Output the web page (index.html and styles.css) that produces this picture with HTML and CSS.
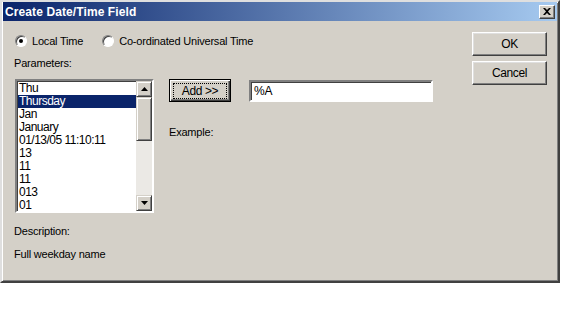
FILE: index.html
```html
<!DOCTYPE html>
<html lang="en">
<head>
    <meta charset="UTF-8">
    <title>Create Date/Time Field</title>
    <link rel="stylesheet" href="styles.css">
</head>
<body>
    <div class="dialog">
        <div class="titlebar">
            <span class="title">Create Date/Time Field</span>
            <button class="close-btn"><svg width="8" height="7" viewBox="0 0 8 7"><path d="M0 0h2l2 2 2-2h2L5 3.5 8 7H6L4 5 2 7H0l3-3.5z" fill="#000"/></svg></button>
        </div>
        <div class="body">
            <div class="main">
                <div class="radios">
                    <label class="radio"><span class="dot checked"></span>Local Time</label>
                    <label class="radio"><span class="dot"></span>Co-ordinated Universal Time</label>
                </div>
                <div class="label params-label">Parameters:</div>
                <div class="params-row">
                    <div class="listbox">
                        <ul class="items">
                            <li>Thu</li>
                            <li class="selected">Thursday</li>
                            <li>Jan</li>
                            <li>January</li>
                            <li>01/13/05 11:10:11</li>
                            <li>13</li>
                            <li>11</li>
                            <li>11</li>
                            <li>013</li>
                            <li>01</li>
                        </ul>
                        <div class="scrollbar">
                            <div class="sb-btn"><svg width="7" height="4" viewBox="0 0 7 4"><path d="M3.5 0L7 4H0z" fill="#000"/></svg></div>
                            <div class="sb-thumb"></div>
                            <div class="sb-track"></div>
                            <div class="sb-btn"><svg width="7" height="4" viewBox="0 0 7 4"><path d="M0 0h7L3.5 4z" fill="#000"/></svg></div>
                        </div>
                    </div>
                    <div class="format-area">
                        <div class="format-row">
                            <button class="btn add-btn"><span class="focus">Add &gt;&gt;</span></button>
                            <div class="textbox">%A</div>
                        </div>
                        <div class="label example">Example:</div>
                    </div>
                </div>
                <div class="label desc-label">Description:</div>
                <div class="label desc">Full weekday name</div>
            </div>
            <div class="side">
                <button class="btn side-btn">OK</button>
                <button class="btn side-btn">Cancel</button>
            </div>
        </div>
    </div>
</body>
</html>
```

FILE: styles.css
```css
body {
    margin: 0;
    background: #fff;
    font-family: "Liberation Sans", Arial, sans-serif;
    font-size: 11px;
    letter-spacing: -0.2px;
    color: #000;
}
.dialog {
    width: 556px;
    height: 279px;
    background: #d4d0c8;
    border: 2px solid;
    border-color: #dfdfdf #404040 #404040 #dfdfdf;
    box-shadow: inset 1px 1px 0 #fff, inset -1px -1px 0 #808080;
}
.titlebar {
    height: 19px;
    margin: 0 1px 0 1px;
    background: linear-gradient(to right, #0a246a, #a6caf0);
    display: flex;
    align-items: center;
    justify-content: space-between;
    padding: 0 2px 0 2px;
}
.title {
    color: #fff;
    font-weight: bold;
    font-size: 12px;
    letter-spacing: 0.1px;
}
.close-btn {
    width: 16px;
    height: 14px;
    padding: 0;
    background: #d4d0c8;
    border: 1px solid;
    border-color: #fff #404040 #404040 #fff;
    box-shadow: inset -1px -1px 0 #808080;
    display: flex;
    align-items: center;
    justify-content: center;
}
.body {
    display: flex;
    justify-content: space-between;
    padding: 9px 11px 0 11px;
}
.main {
    width: 430px;
}
.radios {
    display: flex;
    gap: 17px;
    height: 22px;
    align-items: center;
}
.radio {
    display: flex;
    align-items: center;
    gap: 5px;
}
.dot {
    width: 12px;
    height: 12px;
    border-radius: 50%;
    background: #fff;
    border: 1px solid;
    border-color: #808080 #fff #fff #808080;
    box-sizing: border-box;
    box-shadow: inset 1px 1px 0 #404040;
    position: relative;
    margin-left: 2px;
}
.dot.checked::after {
    content: "";
    position: absolute;
    left: 3px;
    top: 3px;
    width: 4px;
    height: 4px;
    border-radius: 50%;
    background: #000;
}
.label {
    line-height: 14px;
}
.params-label {
    margin-top: 4px;
    margin-left: 1px;
}
.params-row {
    display: flex;
    margin-top: 9px;
}
.listbox {
    width: 135px;
    height: 130px;
    display: flex;
    background: #fff;
    border: 2px solid;
    border-color: #808080 #fff #fff #808080;
    box-shadow: inset 1px 1px 0 #404040, 1px 1px 0 #d4d0c8;
    margin-left: 2px;
}
.items {
    list-style: none;
    margin: 0;
    padding: 1px 0 0 1px;
    flex: 1;
}
.items li {
    height: 13px;
    line-height: 13px;
    font-size: 12px;
    letter-spacing: -0.5px;
    padding-left: 1px;
    white-space: nowrap;
}
.items li.selected {
    background: #0a246a;
    color: #fff;
}
.scrollbar {
    width: 16px;
    display: flex;
    flex-direction: column;
}
.sb-btn {
    width: 16px;
    height: 16px;
    box-sizing: border-box;
    background: #d4d0c8;
    border: 1px solid;
    border-color: #d4d0c8 #404040 #404040 #d4d0c8;
    box-shadow: inset 1px 1px 0 #fff, inset -1px -1px 0 #808080;
    display: flex;
    align-items: center;
    justify-content: center;
}
.sb-thumb {
    height: 44px;
    box-sizing: border-box;
    background: #d4d0c8;
    border: 1px solid;
    border-color: #d4d0c8 #404040 #404040 #d4d0c8;
    box-shadow: inset 1px 1px 0 #fff, inset -1px -1px 0 #808080;
}
.sb-track {
    flex: 1;
    background: #ebe9e5;
}
.format-area {
    margin-left: 15px;
}
.format-row {
    display: flex;
    gap: 18px;
}
.btn {
    font-family: "Liberation Sans", Arial, sans-serif;
    font-size: 12px;
    letter-spacing: -0.4px;
    background: #d4d0c8;
    border: 1px solid;
    border-color: #fff #404040 #404040 #fff;
    box-shadow: inset -1px -1px 0 #808080, inset 1px 1px 0 #dfdfdf;
    padding: 0;
    color: #000;
}
.add-btn {
    width: 62px;
    height: 23px;
    border: 1px solid #000;
    box-shadow: inset 1px 1px 0 #fff, inset -1px -1px 0 #404040, inset -2px -2px 0 #808080;
    display: flex;
    align-items: center;
    justify-content: center;
}
.focus {
    display: block;
    width: 52px;
    line-height: 14px;
    border: 1px dotted #000;
    text-align: center;
}
.textbox {
    width: 177px;
    height: 18px;
    line-height: 18px;
    padding-left: 3px;
    font-size: 12px;
    background: #fff;
    border: 2px solid;
    border-color: #808080 #fff #fff #808080;
    box-shadow: inset 1px 1px 0 #404040;
    margin-top: 1px;
}
.example {
    margin-top: 23px;
}
.desc-label {
    margin-top: 11px;
    margin-left: 1px;
}
.desc {
    margin-top: 9px;
    margin-left: 1px;
}
.side {
    display: flex;
    flex-direction: column;
    gap: 5px;
    margin-top: 2px;
}
.side-btn {
    width: 75px;
    height: 24px;
}
```
